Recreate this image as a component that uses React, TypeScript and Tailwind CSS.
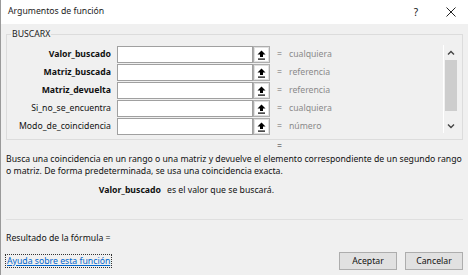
const rows = [
  { name: "Valor_buscado", bold: true, type: "cualquiera" },
  { name: "Matriz_buscada", bold: true, type: "referencia" },
  { name: "Matriz_devuelta", bold: true, type: "referencia" },
  { name: "Si_no_se_encuentra", bold: false, type: "cualquiera" },
  { name: "Modo_de_coincidencia", bold: false, type: "número" },
];

const RefButton = () => (
  <div className="w-[17px] h-[17px] border border-[#adadad] bg-[#e1e1e1] flex items-center justify-center">
    <div className="w-[13px] h-[13px] bg-white flex items-center justify-center">
      <svg width="9" height="10" viewBox="0 0 9 10">
        <path d="M4.5 0.5 L8.5 4.5 L6 4.5 L6 7 L3 7 L3 4.5 L0.5 4.5 Z" fill="#000" />
        <rect x="1" y="8.5" width="7" height="1.2" fill="#000" />
      </svg>
    </div>
  </div>
);

export default function App() {
  return (
    <div
      className="w-[468px] h-[275px] bg-[#f0f0f0] border-l border-[#9a9a9a] flex flex-col text-[8.7px] text-[#111] overflow-hidden"
      style={{ fontFamily: '"Noto Sans", "DejaVu Sans", sans-serif' }}
    >
      {/* barra de título */}
      <div className="h-[24px] bg-white flex items-center pl-[7px] shrink-0">
        <span className="text-[8.7px] text-[#1b1b1b]">Argumentos de función</span>
        <span className="ml-auto text-[10px] mr-[28px]">?</span>
        <svg width="10" height="10" viewBox="0 0 10 10" className="mr-[12px]">
          <path d="M0.5 0.5 L9.5 9.5 M9.5 0.5 L0.5 9.5" stroke="#222" strokeWidth="1" />
        </svg>
      </div>

      {/* grupo BUSCARX */}
      <div className="relative mx-[5px] mt-[10px] h-[106px] border border-[#dcdcdc] flex pr-[5px] shrink-0">
        <span className="absolute left-[4px] -top-[7px] bg-[#f0f0f0] px-[1px] leading-[12px] text-[#222]">BUSCARX</span>
        <div className="flex flex-col gap-[1px] pt-[11px]">
          {rows.map((r) => (
            <div key={r.name} className="flex items-center h-[17px]">
              <div className={`w-[110px] text-right pr-[6px] leading-none ${r.bold ? "font-bold" : ""}`}>{r.name}</div>
              <div className="w-[136px] h-[17px] border border-[#a0a0a0] bg-white" />
              <RefButton />
              <span className="ml-[7px] text-[#6d6d6d]">=</span>
              <span className="ml-[7px] text-[#8a8a8a]">{r.type}</span>
            </div>
          ))}
        </div>
        {/* barra de desplazamiento */}
        <div className="ml-auto mt-[10px] mb-[6px] w-[14px] flex flex-col items-center bg-[#f0f0f0] border-l border-white">
          <svg width="8" height="6" viewBox="0 0 8 6" className="mt-[5px]">
            <path d="M1 4.5 L4 1.5 L7 4.5" stroke="#444" strokeWidth="1.4" fill="none" />
          </svg>
          <div className="w-[12px] h-[51px] bg-[#cdcdcd] mt-[4px]" />
          <svg width="8" height="6" viewBox="0 0 8 6" className="mt-auto mb-[4px]">
            <path d="M1 1.5 L4 4.5 L7 1.5" stroke="#444" strokeWidth="1.4" fill="none" />
          </svg>
        </div>
      </div>

      <div className="pl-[276px] leading-[12px] mt-[0px] text-[#333]">=</div>

      {/* descripción */}
      <div className="px-[5px] leading-[12px] mt-[1px]">
        Busca una coincidencia en un rango o una matriz y devuelve el elemento correspondiente de un segundo rango o matriz. De forma predeterminada, se usa una coincidencia exacta.
      </div>
      <div className="flex mt-[6px] leading-[14px]">
        <span className="w-[166px] text-right pr-[6px] font-bold">Valor_buscado</span>
        <span>es el valor que se buscará.</span>
      </div>

      <div className="mt-auto mx-[5px] border-t border-[#dfdfdf]" />
      <div className="px-[5px] pt-[12px] leading-[12px]">Resultado de la fórmula =</div>
      <div className="flex items-center px-[4px] pt-[8px] pb-[5px]">
        <span className="border border-dotted border-[#333] px-[1px] leading-[12px] text-[#0066cc] underline">Ayuda sobre esta función</span>
        <button className="ml-auto w-[58px] h-[18px] border border-[#adadad] bg-[#e1e1e1] leading-none">Aceptar</button>
        <button className="ml-[8px] mr-[1px] w-[58px] h-[18px] border border-[#adadad] bg-[#e1e1e1] leading-none">Cancelar</button>
      </div>
    </div>
  );
}
